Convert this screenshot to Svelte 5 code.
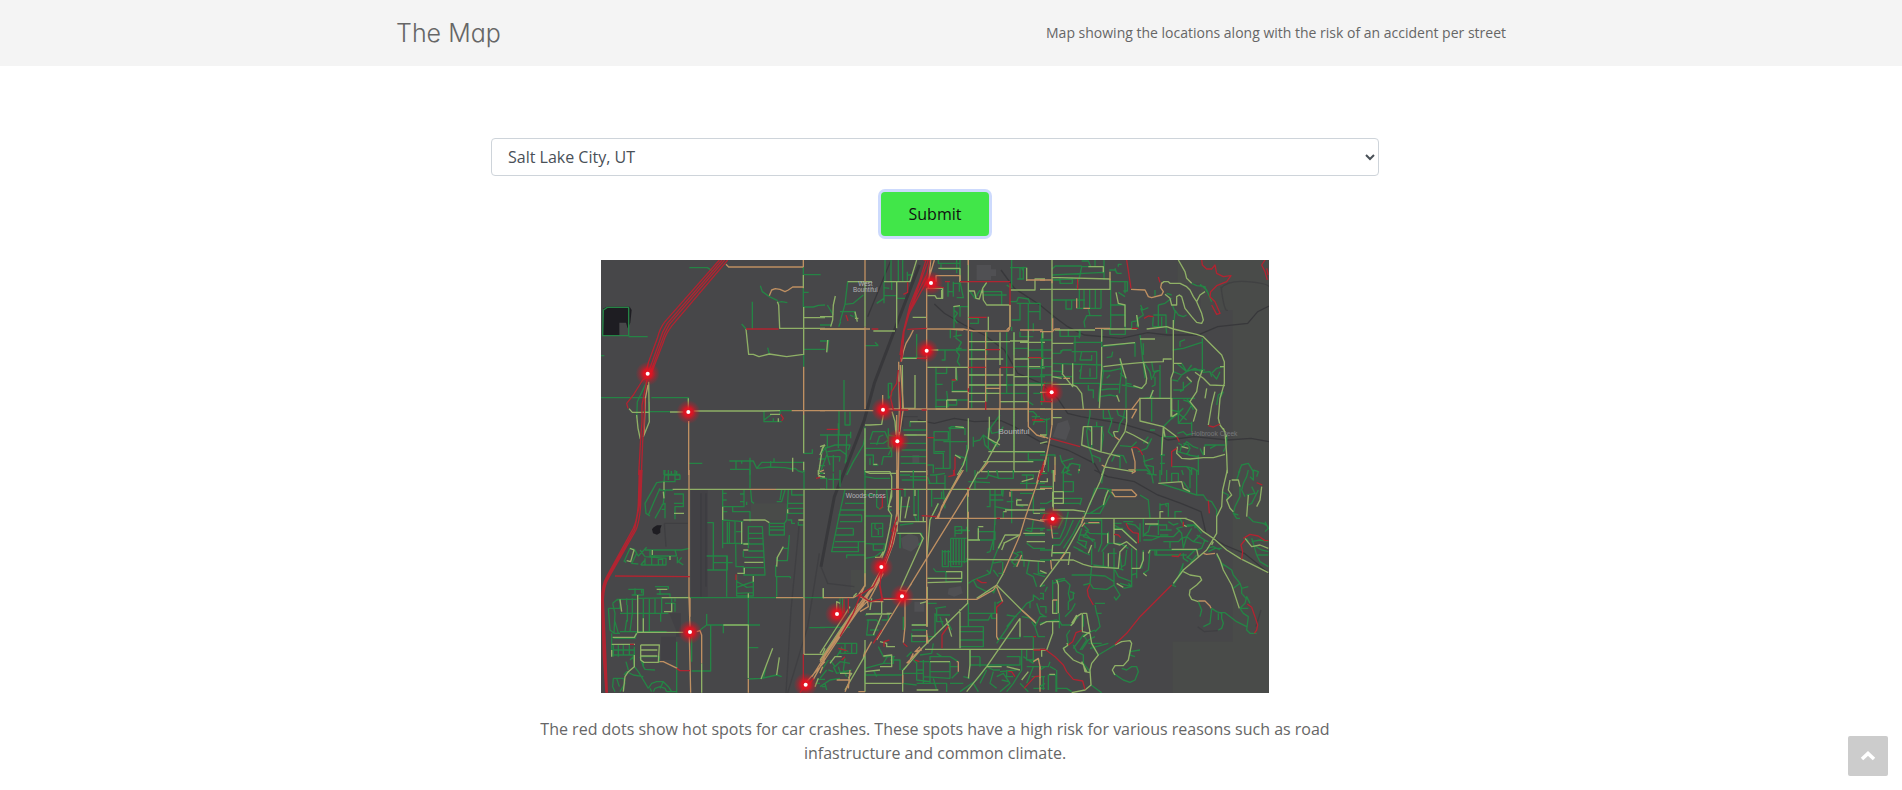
<script>
  const cities = ['Salt Lake City, UT'];
  let city = $state(cities[0]);

  // Street network, split in six sheets; each sheet lists its streets by risk level.
  const sheets = [
    {
      x: -3, y: -15,
      low: 'M268 38H322L335 46M481 92L487 110 508 125 533 137M533 142L545 140 562 143M457 140V222M425 207L438 222M610 36V60M610 59H662M610 100V156M610 112H626M610 156H640L655 151 675 150M610 283H675M611 300V335M503 278L508 297M3 428H140M154 428H265V440M86 245H143M3 302H13M10 165L22 157H86V242H8ZM140 380L112 440 110 490M125 470H210M148 440V490M492 468V500H545M492 495L515 478M540 467H575M540 467V478M520 490V500M611 595H637V583M388 618H460L470 640 485 622H610M408 618V645M390 643H450M450 608V660M470 640L510 636 555 638 575 642 585 640 595 648 610 652M512 618V636M522 610V620M425 618V626M192 645V660M192 658H240M214 648V660M230 648V660M265 625H307M656 612H675M656 632H675',
      mid: 'M532 140L536 150 539 220H675M610 188H675M438 222L446 298 460 298 477 305 508 297 560 305 610 298M610 60V100M611 156V300M611 480V595M611 620V650M281 468H490L540 467M87 461L97 472H148M210 471H250M146 380L148 500 130 545M110 480L114 520 121 552M265 430V466M675 570L667 580 656 655H675M578 608V650M510 478H540M535 490V500',
      high: 'M378 28L386 36H610M610 15V36M508 122L515 105 526 101 540 103 555 110 565 105 578 96H610M611 335V480M266 498V660M575 467H675M144 390L136 430 132 540',
      severe: 'M358 15L195 200Q180 218 172 250L146 320 138 350M366 15L202 205Q186 230 178 260L148 345M374 15L208 208Q192 235 184 262L152 350M383 15L216 212Q196 238 190 262L156 350M143 365L128 375 100 420 80 445 84 460M141 375L126 450 126 500 122 550 116 660M134 430L132 510 128 560 124 660M438 222H536M542 478L550 490 545 498'
    },
    {
      x: 657, y: -15,
      low: 'M83 80L75 148 60 200M83 80H135M75 148L100 145 130 120M60 170H105V190M90 180L100 185M56 215L62 200M195 15V80M192 80V145M213 15V80M235 15V80M248 15V78M262 60H278M262 50V78M170 145L192 130V100M192 98L208 100M192 122H230M192 80H230V130H255M215 80V105M0 210H35M0 185H38M26 255L22 290M135 272H175M165 262L175 272M22 150L40 180M72 375V468M90 470V510H75V470M0 258H25M355 15V25H420M420 15V80M363 28V42H415M384 80V125M400 80V125M400 85H418V110M420 80L430 128 410 128M384 110H400M365 95V105M400 155H445M402 155V220M402 165L412 175 402 190 412 205M420 155V185M447 190H475V205H450M447 105L465 130 480 105M410 15V55M480 110H545V150M490 120H560M488 98L500 85M570 38H620M600 38V72M605 38L608 46M592 72H610V35M575 15V100M560 90L572 98M570 140H590L595 127 625 132 630 145H660V195M590 145H650M600 145V195H575M625 145V225M625 170H660M640 205V230M600 230V245H640M575 215V228M240 308H290V237M391 222V250M410 220L408 250 424 262 410 290 418 300 412 320 420 332M324 285H375V315H365M375 285H440M408 280H425M400 245L425 240M348 335V460M348 355H380V335M348 388H368M348 435H380V448M408 335L412 375 397 380M397 375V408H445M395 435H445M380 408L385 455H345M410 435V450H380M455 232V460M480 260H540M500 230V300M446 285H500M446 390H620M446 415H620M540 440H560M560 232V415M582 232V300M625 225V440M668 225V330M600 310H675M625 340H675M625 385H660M640 415H670V440M582 280H625M582 365H675M625 285H668M582 335H625M446 360H500M500 390V440M205 385V430L215 420V385H205M0 540H92M92 530V550M57 468V540M22 540V575M55 505V580M80 540L78 620M0 600L15 580 45 570H90L85 585M22 590L60 585 80 600 75 625M22 605H60L58 620M0 655L20 600M40 600V650M80 660L100 620 130 570 135 545M15 575L30 630M135 515V660M150 555L158 530H195L205 555 190 565H150M170 570L178 545 190 540M205 520V575L215 580 205 600M135 580H215V605H190L185 630M205 540L230 545M135 600H160V630H175M150 630V610M250 525H320M250 540H290M270 515V500H290M240 565H320M245 585H320M242 605H320M242 625H320M215 555L218 580M342 530H385V555H342ZM342 555V595H370V640H390V520H435V540M385 520L395 515H430M370 560H440M390 560V640M345 590H375M405 600L440 610 425 630M440 570V650M460 545V575M460 560L480 555 490 540 530 570M505 580V520L515 520M490 540L495 570 515 590 540 545M515 560L535 575M540 480L510 520 515 535 540 530 550 515M582 460V590M625 470L640 470 650 480 640 510M640 500H675M625 440L640 450M635 485H660M540 590L675 592M582 620H640M500 650H600M625 595V615H670M322 630H340V655M345 640H375',
      mid: 'M46 123L40 150 38 195 32 215M83 80H155M135 80V215M192 80H270L290 15M230 80V220M38 185H0M23 255L20 292M105 170L112 200M0 222H135M160 228H225M105 190H115M278 187H320M355 40H420M420 40L420 80M322 100H368V130H350L345 122H322M365 105V128M445 15V195M447 108H463L468 130 478 132 488 100 500 82M488 100L490 135 500 150H570V215M400 155L420 152M572 105H645V72H675M445 260H570M570 258H625M620 38V78M540 232V330M446 284H500M505 185V228M582 232V650M446 312H550M446 360H550M446 390H560M446 415H540M540 440H582M446 440H495M322 337H445M285 360V460H250M135 510H150L185 508 190 480M216 470L225 500 228 540M270 500H320M252 540H320M240 310L320 310M252 310H285M324 285H355M408 335V375M395 410H445M406 515L432 518M380 435H410M380 435L380 460M347 462H445M508 485L508 520 505 550 540 570M538 460V550L500 620 475 655M505 590H675M490 620H640M482 650H675M445 490V580L430 630 412 660M405 600L422 610M135 520V650L150 655H235M625 225V285M600 262H675M582 312H625M582 390H675M582 440H625V500M625 285V440M560 360H582M668 230V250M625 335H675M668 310V340M240 650H320M582 365H625M0 575L15 570M0 600L10 575M160 628H172M247 330L248 460 268 462',
      high: 'M135 15V80M135 215V462M0 467H160M0 222H150M320 100V462M205 462H675M570 220L565 228H460L430 222H320M570 150V215L560 225M445 195V222M445 15V30M445 228V462M348 80V62H420V80H445M620 75H675M320 462V660M280 225L270 245 258 265 250 290 244 320M188 420V450M236 320L238 460 235 660M230 480L231 660M497 232V440M540 340V460M625 440V515L650 540 675 548M332 15L325 100M343 15L325 75M497 400H540M505 620L482 650M668 225H600M675 615L668 650M238 540L250 460 244 370 241 330M445 340V420M390 222L430 225',
      severe: 'M310 15L325 15 290 110 260 190 245 260 242 320M318 15L298 80 270 150 250 230 240 300M330 15L320 60 290 120 266 180 252 230 246 310M326 75L345 80M320 80L270 170M340 95L372 98M420 80H570M446 187H500M263 82V112L250 118M78 180L84 198M155 222H175M262 223L320 220M290 310H320M497 284H540M446 337H497M540 337H580M625 308H668M235 345L230 385 215 410 212 430 220 465M238 380L242 460 238 530M220 465H265M305 465H320M20 523H55M395 375H408M445 400V410M497 440V465M322 548H342M405 605V640L400 660M636 495H668M570 85V150M675 380L668 410 675 440M672 620L660 660M375 80H390'
    },
    {
      x: 1317, y: -15,
      low: 'M36 42L46 33H125M125 35H190M125 35L120 60 110 98M125 18H145L152 35M36 60L190 52M210 80V50M192 15V75M60 68V85H97V68M208 45H225L232 55H245M225 40L230 55M235 35V28H245M36 75L120 70M165 15V35M118 103V160M132 103V160M149 103V160M166 103V160M183 103V160M105 135H135M110 160H183M78 135V162H95V137M36 135H110M212 80V220M212 80H262V108H250M235 112L255 125M232 148L255 150V180M255 80V115M212 150H256M212 180H256M210 220V238H256V180M135 218L132 200 140 182H185M150 182L145 160 180 160M60 222V244H120V222M85 222V245M118 225V250M105 245V320M100 262H185M36 295H60L68 285H95M63 285V295M95 290H170V370H120L125 330M125 290L120 315H155V300M36 325L185 330M98 325V395M66 325V360M36 348L66 350M36 365H100M100 385H180L175 440M145 390V405H160V430M118 350L125 340M150 365V340M185 220V275M185 275L285 263V305M200 308L215 305 218 290M185 330L190 350 178 430M185 348H210L245 340M200 370L210 360M180 388H240M182 405L205 402H235M180 425L210 420 235 425M240 310L245 350 240 385 238 415M240 355L258 370V460M245 390L310 400M330 430L338 405M255 392L262 385 275 388M302 160L310 180 295 190 290 215M302 150L308 165 325 158M340 185L338 215M355 150V215M340 215H378V180H340M365 185V215M355 150L375 145 395 130M345 105V125M275 200V220M290 180L295 220M275 200L290 198M378 215L380 235M397 150L405 170 400 215M405 165L415 180 430 185 440 180M395 120L380 115M415 15 L415 15M455 85L470 92 495 95 500 110M480 88L500 105 515 140M300 240L308 310 315 370M310 265V300M420 275V260L435 254M397 285L430 280 485 262M487 250V345M310 320L330 350 335 375M335 320L340 350 362 345M345 350L338 370M345 365V390L335 395M360 330V430M360 345L345 352M400 350L425 360M397 375L415 378M410 325L440 350 465 340M425 325L440 350 425 360 415 375M440 350L455 330M455 345H495M465 340L490 352 510 350 515 365M515 355L530 340 550 335M515 355L530 372 540 350M400 405L430 405M430 380V405L420 410M430 400L455 380M300 430H465M335 430V500M310 430L340 425M393 430V465L415 470M415 435V505H455M430 435L445 440 455 450 440 475 415 505M440 430L455 450 460 465M395 488L430 460M415 475L440 495M393 450V490M370 515L390 495 410 480 430 460M550 410L535 420 530 450M540 430L550 410M150 462V480L140 530 145 570 155 600 160 625M190 462V490H220M205 465L215 500 205 530 220 545M230 462L235 480 260 490M255 462L250 490 240 505 235 530M130 515H190M170 500V515M145 520L155 530V580M185 515L190 540 183 590M0 255H36M0 285H36M0 310H36M0 335H36M0 360H36M0 385H36M5 235V450M0 440H36M0 490L20 495 30 490M0 540L20 545M20 490V540M0 600H30L45 600V630M25 605V650M60 600L65 620 80 640 95 625 120 630 115 655M65 620L100 610M90 625L80 655 95 660M75 635L65 655M155 600L180 610V620M215 620L225 600 250 602 260 625M240 600L240 640M370 515L372 545 415 545M365 545V660M360 600H375M360 625H375M325 545L310 565M335 550L320 580 295 590M290 560L275 575 240 572M310 600L315 630 330 650V660M310 620L340 610M315 630L340 635V660M330 525H345M412 535L430 530 440 540 460 535M415 565L425 570 420 590M430 565L445 570 450 580 440 600M430 575L440 560 460 575 475 580M412 590L450 600M445 600L475 605M480 580L490 600 495 570H555M510 580L530 570M475 600V660M455 500V530M395 635H440L455 650M440 635L460 640 475 650M455 640V660M560 540V570L550 590M595 655L605 630 625 625 640 650V660',
      mid: 'M36 15V225M36 68H60L210 72V105M0 103H210M36 85V95M190 52V35H145M228 112L235 145 255 150V215M36 238V410M36 220V240M45 225H165M185 220V260M190 222H290M320 222L380 215 400 222 470 238 490 245 545 300 553 320V385L540 430 535 490 540 510 555 530 560 600 562 655M36 265H100M190 272L285 263M300 252H345M400 195V350L393 370V485M400 325H425M190 335L245 328 310 322 370 320V312H395M310 320L320 370 318 385 305 400 280 392M36 388H95L110 395 125 415 130 462M36 365L65 370M68 328V355M98 325V395L66 355M185 275V340L178 460M240 310L250 345 258 370M230 420L238 440M300 430V498L370 515 410 545M330 430L340 405M297 430H395V485M397 485L412 475M440 365L455 380M465 352L490 370 510 390 555 392M487 345L475 380 470 410 450 440 470 465 460 500M525 410L515 450 505 510M500 400L495 430M552 335L540 335M130 515L125 570 180 590 240 605M130 515H155V570M185 515L183 590M260 462L260 500 255 530 205 610 185 660M258 530L280 540 325 565M220 530L235 530M220 530L225 545M190 635L280 650M0 462H36V510M36 488H65M0 540H20M412 575L410 595 425 610 450 612 490 608 520 608 555 598M445 580L425 575M493 575V600M550 520L560 545M375 545L370 515M0 565L22 560M20 600L15 630M370 515L365 600M415 15L435 50 440 70 455 85M365 85L372 80 385 80 390 85H420L440 95 450 105 460 125 470 140 485 175 490 195 485 205 470 202 455 185 435 160 425 125 418 120 410 125V150L395 150 390 130 375 118M495 110L480 120 470 140M480 15 L480 15M290 180L295 215',
      high: 'M0 75H36V85M110 130V160M130 160H150M210 50V75M273 103L315 105 325 125 335 128 365 120 370 110 362 98 365 83M0 230H36L45 222H60M165 220H210M0 463H275L300 430M36 430V510L30 550 20 600 10 640M0 412H36M180 463H290L275 490M225 545L238 555M275 580L285 620V650L275 655M185 630L195 635M0 540L25 550M45 605V660M38 190V225M70 370H90',
      severe: 'M113 72V103M260 15L273 100M355 66L360 82M312 190L325 183 340 185M275 220H295M30 550L120 575M485 15L487 30 500 42H515L525 30 530 55 550 65 573 62 560 80 530 92 512 110 510 125 525 140 540 175 530 178 515 150M675 15L665 30 675 50 682 75M685 60L680 40M505 512L520 516 540 507M410 545L418 560M275 577H290L300 585 308 600M395 635V590L410 580M0 440H36M0 310H5M0 495H10M10 630L5 660'
    },
    {
      x: -3, y: 630,
      low: 'M195 0L192 35 170 38 135 100 138 130 150 138M180 55L160 100 145 135M195 60L190 100 165 145M220 60H175M192 35H225V0M205 0V30M195 15H240V28H225M185 105L195 100V145M185 118H195M222 72H250V110H225V148M195 145M222 100H250M368 60V235M368 70H380M368 90H380M368 110H432V60M432 72H420M432 95H420M370 125H382M398 110V125H450V155M452 60L455 95 462 100M450 0V55M440 95V105M555 60L545 95H530M565 60L560 150M545 60L540 90M575 60V75H610M563 100H610M563 115H610M563 130H610M580 75H590M563 150H575V160H585M595 155V165H610M612 0V60M370 150L430 155M382 155V220M405 155V220L445 222M388 220V155M408 185H425V155M370 220H450M445 168V235M445 170H487L495 315H430M445 190H487M445 205H488M445 222H490M445 243H492M433 262H492M433 293H495M430 243V262M433 315L430 290M407 220L408 290H432M410 315V378H460V318M410 335L430 345 460 335M410 352L430 345 440 352 460 350M410 370L460 368M508 160V195H553V160ZM508 170H553M508 180H553M553 160L560 150M568 195L562 272H530V262M530 320V380M527 320H570L572 325M527 285V320M550 235H565M322 158H340V300M320 258H382V300H322M380 258V380M340 278H398M345 300M72 275L90 235 105 240 110 250 95 280 115 282M72 270L78 278M100 235L115 258 140 232M120 240L135 260 200 265M135 240H245L268 235M150 240V258H230M155 258V285M122 285H198V265M135 265V285M175 285V268H188V285M135 270L122 285M230 258L225 240M245 262L235 275 250 285M232 260V280M85 358H130V375H95M105 355V375M125 358V370M165 350H205V358M170 372H210V385M180 375V358M25 415H60V388L50 390 38 400M50 388H110M115 385L270 382M80 385V405M97 385V430M130 385V430M148 385V430M165 385V430M185 385V430M115 430H205M82 405V455M60 430H115M82 430V450M80 450L75 485M97 430L90 485M38 400L45 430 42 490M25 415L30 480 42 490H60M45 455L55 490M60 485H200M130 430V485M148 430V485M215 385V425M225 385V395M182 430V455M195 400H225V425M35 490V555H103V530M40 505H105L110 485M40 525V560M55 525V560M70 525V555M88 525V555M40 540H103M120 560L130 590 135 598 165 600M120 560H178V578M130 575V590M90 570L100 560 103 590M103 590L115 605 130 630 145 655M78 575L85 600M40 625H70L75 640 60 665M40 625L38 650 45 665M50 625L58 650M72 615L80 605 100 615 130 620M145 655L155 640 170 635 190 635 205 650 215 665M150 655L155 665M160 665L165 655 180 650 195 655 200 665M180 655L190 635M230 515V668M200 665H230M270 383H675M445 383V480M445 480V625M318 465H480M320 432V465L300 480M370 465V490M332 465V603H275M445 533H475M445 627L485 625 530 615M498 590L490 625M530 615L545 620M275 490V575M628 473H675M650 628H675M645 640H660M665 650H675',
      mid: 'M192 35V60M218 58H450M222 130H252M528 58H675M190 65L192 85M368 110V150M430 150L495 150 508 158M425 155V222M430 222H445M430 240H445M433 277H490M433 293V310H412M460 318V335M530 290L532 262 550 230M595 150H610M612 58V383M563 118V130M90 235L102 240 92 275 80 272M157 240V255M210 258V270M113 375V490M170 358H202M185 383H270M60 388L65 425M130 445V485M113 487H250M192 383L235 383M192 425H215V400M38 502H103L110 490M35 523H105M103 555V590L85 605 75 620 70 665M35 540V560M122 540H172M122 558H172M122 525V570L132 577H175L178 525H122M370 465H445V560M445 370V383M445 560V625M483 627L518 535M530 615L538 562M305 580V668M610 553H668L675 535M655 0V15L675 25M670 355V383M655 20L675 20M655 625L645 650',
      high: 'M267 0V383L270 470M268 500L272 668M450 58H528M270 383V440M528 383H610M612 383V553M290 485L300 482 305 495V580M178 575L190 575 232 595M445 627V668M640 628L675 565M636 620L675 558M660 5L672 0M620 635L675 575',
      severe: 'M118 0L115 100Q112 150 100 175L20 320Q5 345 5 390L10 560 18 668M126 0L122 100Q120 150 108 180L28 320Q12 345 10 390L15 500 22 668M122 0L119 100 104 178 24 320Q8 345 8 400L14 560 20 668M45 318L270 320M408 313V330M230 595L240 602H270M90 523H102M610 553V635M648 25L660 22M600 668L620 640M630 640L640 625'
    },
    {
      x: 657, y: 630,
      low: 'M0 25H20V58M40 10V58M25 28H60M60 0V50M0 10H10M0 58M60 120H135M55 135H125M75 58L60 125 35 245H115V215M50 175H100M45 195H100V175M45 215H135M40 232H115M80 265V255H135M60 155H125V135M75 100H135M135 0V320M135 20L165 25H210M170 60V110L180 118 190 110M135 75H165M200 60L205 120H215M135 138H215M155 160H188V200H155ZM165 160V175L175 180V195M188 175H175M135 220L160 222V240H190L195 222H160M135 265L165 260 185 245M240 60V120M255 80V55M280 0V55M270 20H320M245 30H320M282 58V130L290 155M295 60V155M240 15H270M240 110H270M230 190H305V215L295 225M240 190V235M355 100L330 150M240 165L280 160M320 58M335 58V110M340 85H365V65M370 60L375 115M360 85H378M375 15V58M325 40H375M330 15H350V40M322 20L330 40M345 15L375 10M405 170V200M403 170H425V190H405M415 180H440V170M405 182H450M392 205H440M392 205V290H425M400 205V285M408 205V285M417 205V285M425 205V290M433 205V280M367 245H390M367 240V290H385V240M375 240V285M383 275H440V265M340 295L348 305H425V335M378 305V335H425M378 320V305M322 325H375M465 0V58M470 25H500L505 15 540 25H570M445 35L510 38M505 15V0M530 0L535 25H580V0M510 58V110H500M525 58V165M510 75H545V60M510 90H550M525 110L575 120V160M550 125V145M475 170V210M475 185H525V210M445 210H520L510 245 500 248M475 210H445M525 145L520 240M550 58L548 80M575 58V120M590 85V105L610 110M600 70H640M600 40H675M605 15H640V25M620 15V58M640 70V130M560 95H580M615 180L635 185 640 150M620 175H675M615 195H675M590 248L605 245 608 270M575 245L595 255 575 275 590 290M620 220L640 235H675M628 270L620 310 640 320 650 350M612 270V290M655 275V310H675M640 310L675 320M540 220L520 270 510 310 460 330 470 350 500 365H520L530 350M515 280L545 275M548 275V310H535M460 330L445 340M500 300L510 310M520 300L535 320M600 270L580 290M445 400V450H505L515 430V445H530M445 430H530M480 430H525V395M420 470H490V530H420M445 450V470M420 485H490M420 510H490M345 415L378 410M350 415V455H370M345 435H390M345 430V500H325M360 440L370 470M378 445L395 480M530 400L548 390M530 350L520 370M560 435L590 440M585 440L560 470M600 425L620 400 640 390 640 375 660 390M605 420L585 440 530 520M630 415V395M650 400L660 430 675 440M660 440L645 470 655 500H675M645 470L635 455M610 500H640V560M605 440L635 445M530 505H600M600 505V490M135 435L165 430H185M140 450H170L180 465M145 450L140 495H165M150 480H175M205 435V450H185M275 465H322M275 490V515H325M275 480H320M250 440V480M135 470M0 472H90M60 385V420M68 385V430M50 520H110V550H60L65 530M75 520V550M95 520V550M50 560L65 535 85 545M30 570L45 590 60 575 90 580M40 590L50 610 95 600M75 565L70 600 80 620M25 600L40 605M0 625L20 600M5 600L25 570M0 650L30 630 60 625M15 640L20 660M55 590L60 605M65 610H90L85 630M135 560V640M135 595L190 580 205 555M135 615H245M210 570H240V600M225 560H190L175 530M190 580H220V560M245 600L260 590M275 545L260 560M280 570L290 580 290 630 330 635M310 570V640M330 575H390V605H330ZM330 605V640M290 600H310M310 620L390 625V605M330 570V560H390L415 575M300 555L335 550M290 575H330M340 625L350 660M290 640H380V665M390 590H415M415 605L395 625M250 610H310M450 540V590M450 560H480M450 585H600V560H560M500 590L470 630 420 665M500 590L520 600 540 600M520 605L510 640 530 655M500 600L480 640M540 605L590 600M560 600V620H580M530 620L550 610 570 640 540 665M545 630L565 635M605 540V600L580 640 560 665M460 640L475 665M430 620L450 625M480 590V560M640 540V580M620 540V570H660M620 590H675M635 620H675M640 655H675M660 600V650M610 560L640 580M640 590L620 640M600 640L625 665M390 640L430 640M350 550L365 560M340 520L335 550M250 640L290 645M160 600L170 620M320 400H350',
      mid: 'M0 58H675M135 5H210L215 20V80L205 110H215M135 60V350M190 245L180 262H165M215 60L205 120 215 135 210 170 195 240 185 265M245 80L240 155H320M268 80L255 145M285 78V60M232 190H300L310 205 290 250 240 360 260 365M425 0L370 100M355 100L330 150 320 265M475 5L445 60M443 60V400L310 530 250 600M445 268L605 270 675 275M550 220L600 195H555L535 235M550 310L530 345 470 385M553 220L545 240M530 345L605 420M605 420L648 460M322 325H425V305H378M322 338L425 335M420 418V535M378 445L395 500M600 445L500 590 440 665M600 445V500M315 538H675M450 540V585L445 625M320 490L325 520M275 465H320M275 498H320M180 515L200 520V530H225M135 510V640M138 432H210M135 540L130 565 75 660M185 435L160 495M215 430L200 430M180 590H215V555L190 558M135 605L180 600M30 580L45 560 65 560M60 610H95L85 625M10 355V385M0 550L45 480 90 410M0 570L60 480 115 400M248 600V665M290 660H355M330 575H390M500 590H545M555 120H675M550 125H560M590 90H605M590 90V105H625M475 170H490M475 175V210M445 210H480M135 640H245M605 35L640 25M610 190H675M620 215H675M300 400L320 395M625 605L605 630M560 590L600 600M185 395V430M155 385L150 420M100 380L110 370M50 430V395L60 400M135 630V665M322 350L322 470M640 130L675 130M310 155V140M280 135H290M230 155L232 185',
      high: 'M230 0L230 130 222 180 205 260 150 360 90 440 0 575M235 0L235 150 220 220 190 300 130 400 60 500 0 590M233 0V120L210 240 170 340 100 435 10 565M190 310L150 385 80 460 20 545M185 315L120 410 70 470M225 185L200 265M320 0V470M135 310V345L115 375 100 383H10M135 345L120 380 150 395M140 380L145 410 120 425M190 388H470L520 360 530 345M430 0L365 110 355 145M450 55L320 265 170 510M420 10L350 145M345 145H620L675 155M615 145L600 195 550 310M445 125V145M445 60V80M655 30L615 145M660 0L650 40M155 515L130 560M305 540L285 545 300 530M250 518L255 470V385M320 480V520M305 535L260 580M530 430V500L535 510M605 420L645 455M570 60H640M570 65V80M605 255L590 290M640 575L655 565 660 590V665M280 550L265 580M248 615V640M415 575V605M410 575H415M530 350L548 395M90 600L85 655M135 665H115M155 395H190M75 665L90 630H50M240 362H260L275 340M322 500V520M0 610L8 590',
      severe: 'M400 0L405 15 385 20M215 58H250M440 55H448M215 185L232 140M225 160L205 240 185 290M230 165L215 230 195 280M187 75V110L178 118M305 137L350 140M530 145H540M665 0L655 30M675 130L668 145 675 155M185 300L180 345 188 390 180 392M185 300L160 350 110 380M120 378L100 430 60 500M115 373L150 395 190 385H240M178 345L186 388M72 388V430M85 385V430M470 328L485 338 500 338M548 395L530 412V430M385 468L366 495V535M185 480L160 520M192 530V515L208 510M250 520L262 530M285 570L298 575M55 535L80 542M75 560L65 570M640 540H675M640 500H648M565 605H575L585 620M612 655L645 620 660 618M660 620V600'
    },
    {
      x: 1317, y: 630,
      low: 'M36 0V10M70 0V65H38M70 35H100V65H70M70 10L90 0M38 50H0M0 10H22M38 85H125L120 105M38 100H120M0 100H20L38 90M0 115H15M38 120H85M0 130H38M50 130L70 145 55 175M50 155L38 160M85 125L75 170 60 205M100 150L80 195 60 225H38M120 150L100 190 70 235M38 190H55M38 205H60M38 170H50M38 225M20 180H38M0 180H10M38 250H80M0 240H38M38 270H0M185 40L190 0M165 55H190L215 60M165 55L150 105M200 65L190 105 150 130M210 75L180 130H130M205 60L225 80M135 160L180 160M130 165L145 180 130 200 165 210M135 180L150 190 205 192V185M120 195H140L160 215M110 215L140 235M100 230L130 245M115 240L150 255M125 175L115 210 140 215 135 235M150 150H185V220L175 245M165 235V215M220 160H245M220 175H250M205 192V220L185 245M205 220H240L265 235M205 250H230M190 245V290M155 235V285M250 155H280M222 165L240 175M250 180L285 215M300 160V215M300 180L285 165 260 160M310 145V200M330 165H380V180M355 150V195M360 100V120M360 105L385 100V140M380 110L375 100M310 195L355 200H400L420 180M310 210H335L360 200M330 165L325 185 310 195M385 155L400 165 415 160M405 145V125H425M360 180H395M360 195H385M420 145L430 165M440 165H465V175M430 170L410 175 425 190 430 235M425 205L415 215H370M390 215V235M390 240H345V255H440M350 240V255M330 240H470M330 240L325 300 310 310M310 240L305 295M275 235V335M290 240V325M240 255L245 295M260 240L255 285 245 290M160 285L235 295 250 300M222 235V345L240 375 228 390 222 380M225 300L235 320 275 335M275 315L290 310M265 340L275 350 250 355M240 340L275 350V300M150 315H95M155 288L150 340 160 355 200 358 222 345M150 315L195 318 222 335M75 330L90 345 85 370 90 390M75 325L45 330M90 365L105 370M100 365V385L85 395M85 395V420M106 400L95 420 75 440M38 330V390M38 340L75 330M50 390V430H38M0 370H10V390M0 385H10M0 410H18V430M0 440H20M22 350L15 365M0 350L15 345M0 460L20 455 50 450 60 455 65 465 95 465M58 430V475M130 345L150 340M165 405L170 430 175 445 180 470 165 485M165 400H195M170 430H185M115 440L95 460M130 435V470M165 480L130 495 100 535M165 500L145 510 125 540M130 495L140 510 120 540M145 520L185 520M150 535L205 520M100 525L110 545 130 555V580M85 525L70 535M85 525L80 495 90 480M130 580L150 605M175 555L225 525M175 555L155 525M153 645L185 668M50 655H80L95 665M50 600V665M25 615H48V665M25 615V660M0 600L15 590H25L30 575M30 590L48 600M0 650L15 640M10 620V660M270 545L300 540M270 540V555L285 560M245 595L260 600 275 590 290 590 295 605 285 630 270 637 250 630 220 610M265 0H320L335 15 340 40M320 10L350 15M360 0V35M380 0V35M395 35V10H415V35M425 0L430 15M430 35L450 65M360 40L470 75V0M450 0V55M470 75H490L500 90 515 95 530 120 530 145M300 75L325 90 330 145M440 170L465 165 485 190M455 175L440 200 425 205M440 200L460 215 485 220M470 195L495 210 485 235 470 240M480 195L460 215M490 210L505 215M440 200L430 235M500 235L520 230 540 240M505 245L525 235H545M430 250V265L445 275M440 260L455 270M470 255L450 280M425 300L430 280M465 240L440 265M430 300L400 345 M395 345L408 350M430 280L415 320M530 255L545 280 560 290 575 300 580 315 600 340 605 355 625 350M550 290L545 285M580 355L600 340M605 355V370L618 385M600 415L615 400 620 380 630 400M600 415H625M600 415L610 430 625 440 620 480 630 490 650 490M515 415L510 460 490 470M475 395L485 420 480 440M515 415L530 425 545 430V445L550 460 545 475 535 480M540 428H555L590 455 620 470M535 430V450M600 0L590 30M625 0L620 20 610 40 605 60 615 80M630 20L640 30 640 0M640 0L655 5 650 20M625 105L635 100 655 60M635 50L645 70 620 75M545 65L565 75 560 90M600 50V80L585 110 580 130 595 135M580 130L590 145H600M625 140L640 155 670 160 685 170M675 155L685 175 675 185M635 205L640 220 650 255H685M650 255L660 275 685 290M640 225L665 240 685 245M620 205L625 215M635 215L660 210 685 215',
      mid: 'M40 0V120M38 65H70V85H40M0 35H22V25M42 100H70V70M38 120H100L135 125M38 145H300M192 0L180 35 150 100 125 160 75 250 60 270 0 350M205 60L195 85 190 105M0 190H10M38 225L35 260M35 248H90L85 285M35 270H100L130 283 155 290M155 290L235 295 240 245 260 225M222 145V220L240 225 260 215 290 240M222 178H245L290 220M203 190V220M205 250V290M155 225L145 250M275 295H300L310 270V245M320 318L310 310M330 240L325 250M230 340L250 352M290 145H435L460 155 490 185 520 205 560 240 600 265 685 308M315 162H355M330 145H440M360 145V125H370M395 238H470L475 260M355 40L425 35 430 55 450 65M430 0M562 0L548 60 545 110 530 140 530 190 500 240 430 300 400 340M575 30H595L600 50M570 30L565 60 575 75 560 90 570 115 580 125M625 75L620 140M665 50L660 90 650 110M615 205L635 230 660 225 685 235M430 305L450 315 480 320 485 330 470 345 450 360 448 375 455 388 475 395M430 165L440 170M520 215L515 225M530 250L540 270 550 300 575 345 598 415M50 330L55 345V430M38 390V430H52M55 385M0 465L20 455H58M38 455V490L20 540 5 540V560M125 430L110 440 100 460 92 467M128 430H140L145 460 150 485 130 500M127 430V485L150 490M150 490L155 520 175 555 155 580 150 600 153 645 135 660 95 668M85 525L70 535 75 545 100 570 130 583 135 605 150 608M80 520L85 525M225 525L245 515 270 512 275 520 265 570 250 587H225L217 600 225 615M95 460L110 435M28 613H45M125 575L140 605M38 65V110M0 302L20 310',
      high: 'M44 0V35M0 55H36M0 150L30 148M33 165L38 205M32 270L35 298M145 158H178M135 158L125 170M130 140L125 160M75 248L62 268M215 60H275L290 75 285 80H225L215 65M38 390H52M490 250L500 253 525 250M475 393H495L510 408 513 415M0 590V625M265 0H285V5M115 0H120',
      severe: 'M5 0L0 15M505 92L508 130M430 155V170M258 160L265 175 280 188 295 190V220M222 193L235 195 242 203M395 258L415 260 422 250M395 345L345 395 300 440 260 490 225 523M150 343L142 360 145 378 160 405M125 482L108 488 98 515 85 525M15 538L45 560 70 585 80 605 100 628 128 633 135 658M650 38L667 45M610 205L630 193 655 198 675 212 685 212M615 210L603 225 608 245 605 268M622 402L635 412 645 440 653 465 650 480 643 490M0 538H15'
    }
  ];

  const hotspots = [
    [140, 341], [262, 456], [990, 69], [977, 272], [846, 449], [889, 544], [1352, 397],
    [267, 1116], [614, 1274], [841, 921], [903, 1009], [708, 1062], [1355, 776]
  ];
</script>

<header class="banner">
  <div class="container banner-row">
    <h1>The Map</h1>
    <p>Map showing the locations along with the risk of an accident per street</p>
  </div>
</header>

<main class="container">
  <div class="panel">
    <form onsubmit={(e) => e.preventDefault()}>
      <select aria-label="City" bind:value={city}>
        {#each cities as name}
          <option value={name}>{name}</option>
        {/each}
      </select>
      <button class="submit" type="submit">Submit</button>
    </form>

    <svg class="map" viewBox="0 0 2004 1299" role="img" aria-label="Street risk map">
      <defs>
        <radialGradient id="glow">
          <stop offset="0" stop-color="#f00f20" />
          <stop offset="0.35" stop-color="#e9101f" stop-opacity="0.9" />
          <stop offset="0.65" stop-color="#df1020" stop-opacity="0.4" />
          <stop offset="1" stop-color="#df1020" stop-opacity="0" />
        </radialGradient>
      </defs>
      <rect width="2004" height="1299" fill="#474749" />
      <g fill="#494b49">
        <path d="M1730 0H2004V1299H1715V1145H1895V510H1895V150H1800V70H1730Z" />
        <path d="M1510 720H1645V770H1500ZM1620 230H1710V300H1620ZM450 730H560V780H450ZM750 930H830V990H750Z" />
      </g>
      <g fill="#424145">
        <path d="M270 690H320V1010H270ZM205 1060H240V1130H180V1200H225V1110Z" />
      </g>
      <g fill="#505053">
        <path d="M1127 15H1170V28H1185V48H1170V60H1127ZM900 835L925 820 950 830 955 855 930 875 905 865ZM1043 985L1080 978 1085 1000 1060 1010 1040 1003ZM1370 490L1400 480 1408 505 1395 540 1355 530ZM934 585H955V612H934ZM940 1025H970V1055H940Z" />
      </g>
      <g fill="#1e1d22">
        <path d="M6 146L18 140H86L92 150 88 188 80 205 75 188H55V226H6Z" />
        <path d="M158 802L168 796H182L178 806V818L168 824 156 820 153 808Z" />
      </g>
      <g class="terrain">
        <path d="M955 15L900 160 820 370 790 480 740 610 700 710 660 920" stroke-width="9" />
        <path d="M870 0L800 170 M1000 132L1030 160 1090 195 1150 225 1210 270 1250 340 1320 370 1370 415 1400 460 1440 470 1560 490 1660 520 1700 540M1200 30L1240 85 1317 135 1360 170 1400 200 1450 225 1560 235 1640 218 1700 225 1790 225 1850 200 1940 190 1970 155 2004 138M950 480L1000 490 1060 475 1120 485 1200 482 1240 500 1290 530 1317 545 1400 570 1480 610 1500 645M1700 540L1780 530 1880 540 1950 535 2004 545M1480 630L1520 650 1600 665 1670 705 1740 730 1800 755 1815 820 1870 855 1930 880 2004 940" />
        <path d="M660 920L680 970 760 980M595 790L570 1050 555 1299M655 880L620 1100 560 1299M1790 1100L1810 1115 1850 1112M1980 1050L1965 1100M1860 80Q1870 160 1880 150M1860 85Q1880 60 1940 65T2004 80M300 700V1010M315 700V980M190 790H260M190 790L195 860M950 470H905V500" stroke-opacity="0.5" />
      </g>

      {#each sheets as sheet}
        <g class="roads" transform="translate({sheet.x} {sheet.y})">
          <path class="low" d={sheet.low} />
          <path class="mid" d={sheet.mid} />
          <path class="high" d={sheet.high} />
          <path class="severe" d={sheet.severe} />
        </g>
      {/each}

      <g class="places">
        <text x="793" y="78">West</text>
        <text x="793" y="97">Bountiful</text>
        <text class="city" x="1239" y="521">Bountiful</text>
        <text class="suburb" x="794" y="715">Woods Cross</text>
        <text class="creek" x="1840" y="528">Holbrook Creek</text>
      </g>

      {#each hotspots as [x, y]}
        <circle cx={x} cy={y} r="36" fill="url(#glow)" />
        <circle cx={x} cy={y} r="6" fill="#fff" />
      {/each}
    </svg>

    <p class="note">
      The red dots show hot spots for car crashes. These spots have a high risk for various reasons such as road
      infastructure and common climate.
    </p>
  </div>
</main>

<button class="to-top" type="button" aria-label="Back to top">
  <svg viewBox="0 0 16 10" width="16" height="10" aria-hidden="true">
    <path d="M2 8L8 2.5 14 8" fill="none" stroke="#fff" stroke-width="3.6" />
  </svg>
</button>

<style>
  :global(body) {
    margin: 0;
    background: #fff;
    color: #666;
    font-family: 'Open Sans', sans-serif;
    font-size: 16px;
    line-height: 24px;
  }

  .container {
    box-sizing: border-box;
    width: 100%;
    max-width: 1140px;
    margin: 0 auto;
    padding: 0 15px;
  }

  .banner {
    background: #f4f4f4;
  }

  .banner-row {
    display: flex;
    align-items: center;
    justify-content: space-between;
    min-height: 66px;
  }

  h1 {
    margin: 0;
    font-family: Inter, sans-serif;
    font-size: 25px;
    font-weight: 300;
    line-height: 32px;
    font-feature-settings: 'cv11';
  }

  .banner p {
    margin: 0;
    font-size: 14px;
  }

  .panel {
    display: flex;
    flex-direction: column;
    align-items: center;
    padding: 72px 127px 24px 95px;
  }

  form {
    display: flex;
    flex-direction: column;
    align-items: center;
    gap: 16px;
    width: 100%;
  }

  select {
    width: 100%;
    height: 38px;
    padding: 6px 12px;
    border: 1px solid #ced4da;
    border-radius: 4px;
    background: #fff;
    color: #495057;
    font: inherit;
  }

  .submit {
    height: 44px;
    padding: 0 28px;
    border: 0;
    border-radius: 4px;
    background: #41e649;
    box-shadow: 0 0 0 3px #cddafd;
    color: #111;
    font: inherit;
  }

  .map {
    display: block;
    width: 668px;
    max-width: 100%;
    height: auto;
    margin-top: 24px;
  }

  .terrain {
    fill: none;
    stroke: #38383b;
    stroke-width: 4;
  }

  .roads {
    fill: none;
    stroke-width: 4;
    stroke-linejoin: round;
  }

  .low {
    stroke: #258445;
  }

  .mid {
    stroke: #8fb066;
  }

  .high {
    stroke: #bf9062;
  }

  .severe {
    stroke: #b12431;
  }

  .places {
    fill: #b4b4b6;
    font-family: 'Liberation Sans', sans-serif;
    font-size: 19px;
    text-anchor: middle;
  }

  .places .city {
    font-size: 24px;
  }

  .places .suburb {
    font-size: 20px;
  }

  .places .creek {
    fill: #77797b;
    font-size: 20px;
  }

  .note {
    max-width: 800px;
    margin: 24px 0 0;
    text-align: center;
  }

  .to-top {
    position: fixed;
    right: 14px;
    bottom: 14px;
    display: flex;
    align-items: center;
    justify-content: center;
    width: 40px;
    height: 40px;
    padding: 0;
    border: 0;
    border-radius: 2px;
    background: #ccc;
  }
</style>
